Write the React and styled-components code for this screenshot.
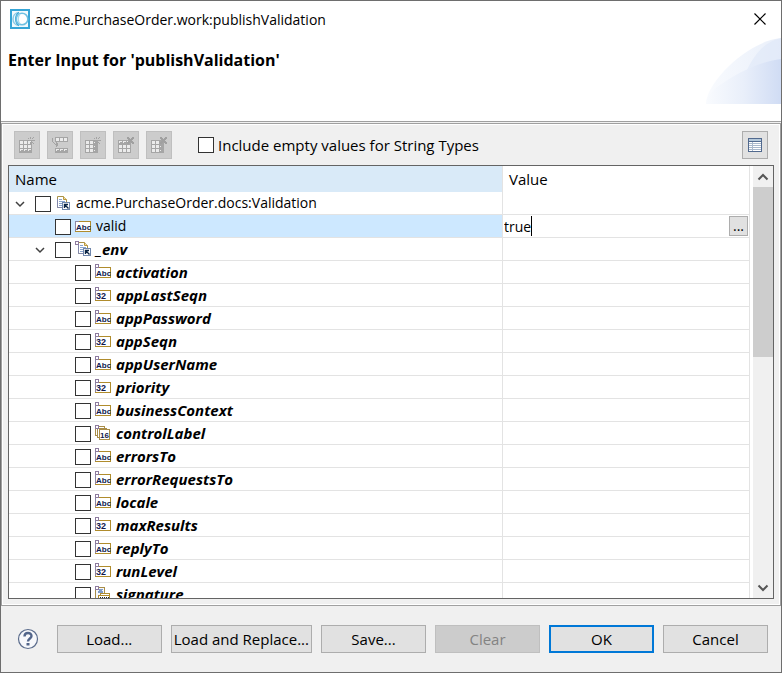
import React from "react";
import styled, { createGlobalStyle } from "styled-components";

const FONT = '"Open Sans", "Noto Sans", sans-serif';

const GlobalStyle = createGlobalStyle`
  *, *::before, *::after { box-sizing: border-box; }
  html, body { margin: 0; padding: 0; }
  body { font-family: ${FONT}; font-size: 15px; color: #000; background: #f0f0f0; }
  button, input { font: inherit; color: inherit; margin: 0; padding: 0; border-radius: 0; }
  svg { display: block; }
`;

const Dialog = styled.div`
  display: flex;
  flex-direction: column;
  height: 100vh;
  border: 1px solid #6e6e6e;
  background: #f0f0f0;
`;

const Header = styled.header`
  display: flex;
  flex-direction: column;
  flex: none;
  height: 121px;
  background: #fff;
  border-bottom: 1px solid #a0a0a0;
`;

const TitleBar = styled.div`
  display: flex;
  align-items: center;
  height: 36px;
  padding: 0 14px 0 9px;
  gap: 5px;
`;

const Title = styled.span`
  flex: 1;
  font-size: 14px;
  white-space: nowrap;
`;

const CloseButton = styled.button`
  display: flex;
  border: 0;
  background: none;
`;

const Banner = styled.div`
  display: flex;
  justify-content: space-between;
  padding-left: 7px;
`;

const Heading = styled.h1`
  margin: 11px 0 0;
  font-size: 16px;
  line-height: 24px;
  font-weight: 700;
  white-space: nowrap;
`;

const Panel = styled.main`
  display: flex;
  flex-direction: column;
  flex: 1;
  min-height: 0;
  margin-top: 1px;
  padding: 6px 6px 6px;
  border: 1px solid #a0a0a0;
  box-shadow: inset 0 0 0 1px #fff;
`;

const Toolbar = styled.div`
  display: flex;
  align-items: center;
  gap: 7px;
  height: 28px;
  margin: 1px 6px 6px 6px;
`;

const ToolButton = styled.button`
  display: flex;
  align-items: center;
  justify-content: center;
  width: 26px;
  height: 28px;
  border: 1px solid #adadad;
  background: #e1e1e1;
  &:disabled {
    border-color: #bfbfbf;
    background: #cccccc;
  }
`;

const Checkbox = styled.input.attrs({ type: "checkbox" })`
  appearance: none;
  flex: none;
  width: 16px;
  height: 16px;
  border: 1px solid #333;
  background: #fff;
  &:checked { background: #333; box-shadow: inset 0 0 0 3px #fff; }
`;

const Option = styled.label`
  display: flex;
  flex: 1;
  align-items: center;
  gap: 4px;
  margin-left: 19px;
  white-space: nowrap;
`;

const TableFrame = styled.div`
  display: flex;
  flex: 1;
  min-height: 0;
  border: 1px solid #646464;
  background: #fff;
`;

const TableView = styled.div`
  flex: 1;
  min-width: 0;
  overflow: hidden;
  padding-right: 3px;
`;

const Table = styled.table`
  width: 100%;
  table-layout: fixed;
  border-collapse: separate;
  border-spacing: 0;
`;

const NameCol = styled.col`
  width: auto;
`;

const ValueCol = styled.col`
  width: 247px;
`;

const HeadCell = styled.th`
  height: 26px;
  padding: 0 0 0 6px;
  border-right: 1px solid #e3e3e3;
  background: ${(p) => (p.$sorted ? "#d9eaf8" : "#fff")};
  font-weight: 400;
  line-height: 24px;
  text-align: left;
`;

const Cell = styled.td`
  height: 23px;
  padding: 0;
  border-right: 1px solid #e3e3e3;
  border-bottom: 1px solid #e3e3e3;
  background: ${(p) => (p.$selected ? "#cde8ff" : "#fff")};
`;

const NameLine = styled.div`
  display: flex;
  align-items: flex-end;
  height: 22px;
  padding-bottom: 2px;
  padding-left: ${(p) => 3 + p.$level * 20}px;
`;

const Toggle = styled.button`
  display: flex;
  align-items: center;
  justify-content: center;
  width: 16px;
  height: 16px;
  margin-right: 7px;
  border: 0;
  background: none;
`;

const ToggleGap = styled.span`
  width: 23px;
`;

const NameLabel = styled.label`
  display: flex;
  align-items: center;
  gap: 5px;
  height: 18px;
  margin-left: 4px;
  line-height: 18px;
  white-space: nowrap;
  font-size: ${(p) => (p.$strong ? 15 : 14)}px;
  font-weight: ${(p) => (p.$strong ? 700 : 400)};
  font-style: ${(p) => (p.$strong ? "italic" : "normal")};
`;

const Editor = styled.div`
  display: flex;
  align-items: center;
  height: 22px;
  padding: 0 1px;
`;

const ValueInput = styled.input`
  field-sizing: content;
  min-width: 0;
  height: 20px;
  border: 0;
  outline: 0;
  background: #fff;
  font-size: 14px;
  caret-color: transparent;
`;

const Caret = styled.span`
  width: 1px;
  height: 20px;
  margin-right: auto;
  background: #000;
`;

const BrowseButton = styled.button`
  width: 19px;
  height: 20px;
  border: 1px solid #adadad;
  background: #e1e1e1;
  font-size: 14px;
  line-height: 16px;
`;

const Scrollbar = styled.div`
  display: flex;
  flex-direction: column;
  flex: none;
  width: 20px;
  background: #f0f0f0;
`;

const ScrollButton = styled.button`
  display: flex;
  align-items: center;
  justify-content: center;
  height: 21px;
  border: 0;
  background: #f0f0f0;
`;

const ScrollTrack = styled.div`
  flex: 1;
`;

const ScrollThumb = styled.div`
  height: 170px;
  background: #cdcdcd;
`;

const Footer = styled.footer`
  display: flex;
  align-items: center;
  justify-content: space-between;
  gap: 9px;
  height: 66px;
  padding: 0 13px 0 16px;
`;

const HelpButton = styled.button`
  display: flex;
  border: 0;
  background: none;
`;

const Actions = styled.div`
  display: flex;
  gap: 9px;
`;

const ActionButton = styled.button`
  min-width: 105px;
  height: 28px;
  padding: 0 2px;
  border: ${(p) => (p.$primary ? "2px solid #0078d7" : "1px solid #adadad")};
  background: #e1e1e1;
  line-height: 24px;
  white-space: nowrap;
  &:disabled {
    border-color: #bfbfbf;
    background: #cccccc;
    color: #838383;
  }
`;

const AppIcon = () => (
  <svg width="20" height="20" viewBox="0 0 20 20">
    <rect x="1" y="1" width="18" height="18" fill="#f2fafd" stroke="#36a5d6" strokeWidth="2" />
    <path d="M9 3.500C1 4 1 16 9 16.500" fill="none" stroke="#8ccbe6" strokeWidth="1.500" />
    <path d="M9 3.500C4.500 6 4.500 14 9 16.500" fill="none" stroke="#36a5d6" strokeWidth="1.200" />
    <circle cx="12" cy="10" r="5.800" fill="#fff" stroke="#6fc0e2" strokeWidth="1.500" />
    <path d="M10 5C7.500 7.500 7.500 12.500 10 15" fill="none" stroke="#a9dbee" strokeWidth="1.500" />
  </svg>
);

const CloseIcon = () => (
  <svg width="14" height="14" viewBox="0 0 14 14">
    <path d="M1.500 1.500l11 11M12.500 1.500l-11 11" stroke="#000" strokeWidth="1.200" />
  </svg>
);

const BannerArt = () => (
  <svg width="75" height="67" viewBox="0 0 75 67">
    <defs>
      <linearGradient id="sweep">
        <stop offset="0" stopColor="#f9fbfe" />
        <stop offset="1" stopColor="#e9effa" />
      </linearGradient>
      <linearGradient id="sweepLow">
        <stop offset="0" stopColor="#f9fbfe" />
        <stop offset="0.5" stopColor="#e9effa" />
        <stop offset="1" stopColor="#d0dcf4" />
      </linearGradient>
    </defs>
    <path d="M0 67C0 45 42 4 75 1V67Z" fill="url(#sweep)" />
    <path d="M40 35C48 18 58 5 75 1V67H40Z" fill="#dce5f7" opacity="0.500" />
    <path d="M0 67C1 59 6 54 11 50C31 36 52 25 75 22V67Z" fill="url(#sweepLow)" />
  </svg>
);

const Grid = ({ x = 0, y = 0, cols = 3, rows = 3 }) => {
  const cells = [];
  for (let r = 0; r < rows; r++)
    for (let c = 0; c < cols; c++)
      cells.push(<rect key={`${r}${c}`} x={x + 1 + c * 4} y={y + 1 + r * 4} width="3" height="3" fill="#ebebeb" />);
  return (
    <>
      <rect x={x} y={y} width={cols * 4 + 1} height={rows * 4 + 1} fill="#a5a5a5" />
      {cells}
    </>
  );
};

const DarkRow = ({ x, y }) => (
  <>
    <rect x={x} y={y} width="13" height="5" fill="#a5a5a5" />
    <path d={`M${x + 1} ${y + 1}h3v1h-2v1h-1zM${x + 5} ${y + 1}h3v1h-2v1h-1zM${x + 9} ${y + 1}h3v1h-2v1h-1z`} fill="#ebebeb" />
  </>
);

const DarkColumn = () => (
  <>
    <rect x="8" y="3" width="5" height="13" fill="#a5a5a5" />
    <path d="M9 5h1v1h-1zM9 9h1v1h-1zM9 13h1v1h-1z" fill="#ebebeb" />
  </>
);

const Spark = () => (
  <path d="M11 0h1v2h-1zM11 5h1v2h-1zM8 3h2v1h-2zM13 3h3v1h-3zM9 1h1v1h-1zM14 0h1v1h-1zM13 1h1v1h-1zM13 5h1v1h-1zM14 6h1v1h-1z" fill="#a3a3a3" />
);

const Cross = () => (
  <path d="M9 0h2v1h1v1h1V1h1V0h2v2h-1v1h-1v1h1v1h1v2h-2V6h-1V5h-1v1h-1v1H9V5h1V4h1V3h-1V2H9z" fill="#a0a0a0" />
);

const toolIcons = {
  addRow: (
    <>
      <Grid x={0} y={3} />
      <DarkRow x={0} y={11} />
      <Spark />
    </>
  ),
  insertRow: (
    <>
      <Grid x={3} y={0} rows={1} />
      <DarkRow x={3} y={11} />
      <path d="M0 1h1v4H0zM1 5h1v1H1zM2 6h1v1H2zM3 7h3v1H3zM4 5h1v5H4zM5 6h1v3H5z" fill="#a3a3a3" />
    </>
  ),
  addColumn: (
    <>
      <Grid x={0} y={3} />
      <DarkColumn />
      <Spark />
    </>
  ),
  deleteRow: (
    <>
      <Grid x={0} y={3} />
      <DarkRow x={0} y={3} />
      <Cross />
    </>
  ),
  deleteColumn: (
    <>
      <Grid x={0} y={3} />
      <DarkColumn />
      <Cross />
    </>
  ),
};

const ToolIcon = ({ name }) => (
  <svg width="16" height="16" viewBox="0 0 16 16" shapeRendering="crispEdges">{toolIcons[name]}</svg>
);

const ViewIcon = () => (
  <svg width="14" height="14" viewBox="0 0 14 14" shapeRendering="crispEdges">
    <rect x="0.500" y="0.500" width="13" height="13" fill="#fff" stroke="#51698e" />
    <rect x="1" y="1" width="12" height="2" fill="#b4c8da" />
    <path d="M0 3.500h14" stroke="#51698e" />
    <path d="M1 5.500h12M1 7.500h12M1 9.500h12M1 11.500h12M4.500 4v9" stroke="#a9b8cc" />
  </svg>
);

const OptionalMark = () => (
  <rect x="0.500" y="0.500" width="3" height="3" fill="#fff" stroke="#8d7b9e" shapeRendering="crispEdges" />
);

const Glyph = styled.text`
  font: normal 700 ${(p) => p.$size}px "Liberation Sans", sans-serif;
  fill: #10194f;
`;

const LabelBox = ({ text, size, x }) => (
  <>
    <rect x="0.500" y="3.500" width="15" height="10" fill="#fff" stroke="#b08c2c" shapeRendering="crispEdges" />
    <path d="M0.500 13V3.500H4" fill="none" stroke="#8a86a6" shapeRendering="crispEdges" />
    <Glyph x={x} y="12" $size={size}>{text}</Glyph>
  </>
);

const DocShape = ({ x }) => (
  <g transform={`translate(${x} 0)`}>
    <path d="M0.500 1.500H6.500L9.500 4.500V12.500H0.500Z" fill="#fff" stroke="#a99248" />
    <path d="M0.500 4V12.500H5" fill="none" stroke="#8288aa" />
    <path d="M6.500 1.500V4.500H9.500" fill="#f3dfa0" stroke="#b9973f" />
    <path d="M2 4.500h3M2 6.500h6M2 8.500h4M2 10.500h3" stroke="#88a4cf" />
    <rect x="5.500" y="7.500" width="7" height="7" fill="#fff" stroke="#6f86ab" />
    <path d="M7.500 13V9.500H11M8 10l3.500 3.500" fill="none" stroke="#0b2545" strokeWidth="1.400" />
  </g>
);

const typeIcons = {
  docRef: <DocShape x={2} />,
  docRefOptional: (<><DocShape x={3} /><OptionalMark /></>),
  string: <LabelBox text="Abc" size={8} x="1" />,
  stringOptional: (<><LabelBox text="Abc" size={8} x="1" /><OptionalMark /></>),
  number: (<><LabelBox text="32" size={9} x="1" /><OptionalMark /></>),
  list: (
    <>
      <g fill="#fff" stroke="#a98d48" shapeRendering="crispEdges">
        <rect x="0.500" y="1.500" width="9" height="9" />
        <rect x="2.500" y="3.500" width="9" height="9" />
        <rect x="4.500" y="4.500" width="10" height="10" />
      </g>
      <Glyph x="5" y="13" $size={8}>16</Glyph>
      <OptionalMark />
    </>
  ),
  object: (
    <g shapeRendering="crispEdges">
      <rect x="0.500" y="1.500" width="9" height="11" fill="#f4f8fd" stroke="#a98d48" />
      <path d="M5.500 2.500v5M3 5h5M3.500 3l4 4M7.500 3l-4 4" stroke="#7f9bc8" />
      <rect x="5.500" y="7.500" width="9" height="7" fill="#fff" stroke="#b08c2c" />
      <rect x="3.500" y="9.500" width="11" height="6" fill="#fff" stroke="#b08c2c" />
      <path d="M5 11.500h9M6 12.500h9M5 13.500h9" stroke="#222" strokeDasharray="1 1" />
      <OptionalMark />
    </g>
  ),
};

const TypeIcon = ({ name }) => (
  <svg width="16" height="16" viewBox="0 0 16 16">{typeIcons[name]}</svg>
);

const ExpandIcon = () => (
  <svg width="10" height="8" viewBox="0 0 10 8">
    <path d="M1 2l4 4 4-4" fill="none" stroke="#404040" strokeWidth="1.500" />
  </svg>
);

const ArrowIcon = ({ up }) => (
  <svg width="12" height="10" viewBox="0 0 12 10">
    <path d={up ? "M1.500 7.500L6 3l4.500 4.500" : "M1.500 2.500L6 7l4.500-4.500"} fill="none" stroke="#555" strokeWidth="2" />
  </svg>
);

const HelpIcon = () => (
  <svg width="22" height="22" viewBox="0 0 22 22">
    <circle cx="11" cy="11" r="9.500" fill="#f7f8fb" stroke="#5b6c8c" strokeWidth="1.200" />
    <path d="M7.500 8.500C7.500 4 14.500 4 14.500 8C14.500 10.500 11 10.500 11 13.500" fill="none" stroke="#52658a" strokeWidth="2.400" />
    <rect x="9.500" y="15" width="3" height="2.500" fill="#52658a" />
  </svg>
);

const rows = [
  { name: "acme.PurchaseOrder.docs:Validation", level: 0, icon: "docRef", open: true },
  { name: "valid", level: 1, icon: "string", selected: true, value: "true" },
  { name: "_env", level: 1, icon: "docRefOptional", open: true, strong: true },
  ...[
    ["activation", "stringOptional"],
    ["appLastSeqn", "number"],
    ["appPassword", "stringOptional"],
    ["appSeqn", "number"],
    ["appUserName", "stringOptional"],
    ["priority", "number"],
    ["businessContext", "stringOptional"],
    ["controlLabel", "list"],
    ["errorsTo", "stringOptional"],
    ["errorRequestsTo", "stringOptional"],
    ["locale", "stringOptional"],
    ["maxResults", "number"],
    ["replyTo", "stringOptional"],
    ["runLevel", "number"],
    ["signature", "object"],
  ].map(([name, icon]) => ({ name, icon, level: 2, strong: true })),
];

const tools = [
  ["addRow", "Add row"],
  ["insertRow", "Insert row"],
  ["addColumn", "Add column"],
  ["deleteRow", "Delete row"],
  ["deleteColumn", "Delete column"],
];

const FieldRow = ({ row }) => {
  const id = `field-${row.name}`;
  return (
    <tr>
      <Cell $selected={row.selected}>
        <NameLine $level={row.level}>
          {row.open ? (
            <Toggle aria-label={`Collapse ${row.name}`} aria-expanded="true"><ExpandIcon /></Toggle>
          ) : (
            <ToggleGap />
          )}
          <Checkbox id={id} />
          <NameLabel htmlFor={id} $strong={row.strong}>
            <TypeIcon name={row.icon} />
            {row.name}
          </NameLabel>
        </NameLine>
      </Cell>
      <Cell>
        {row.value && (
          <Editor>
            <ValueInput aria-label={`Value of ${row.name}`} defaultValue={row.value} />
            <Caret />
            <BrowseButton aria-label="Edit value">...</BrowseButton>
          </Editor>
        )}
      </Cell>
    </tr>
  );
};

export default function App() {
  return (
    <>
      <GlobalStyle />
      <Dialog role="dialog" aria-labelledby="dialog-title">
        <Header>
          <TitleBar>
            <AppIcon />
            <Title id="dialog-title">acme.PurchaseOrder.work:publishValidation</Title>
            <CloseButton aria-label="Close"><CloseIcon /></CloseButton>
          </TitleBar>
          <Banner>
            <Heading>Enter Input for 'publishValidation'</Heading>
            <BannerArt />
          </Banner>
        </Header>
        <Panel>
          <Toolbar>
            {tools.map(([name, label]) => (
              <ToolButton key={name} aria-label={label} disabled><ToolIcon name={name} /></ToolButton>
            ))}
            <Option>
              <Checkbox />
              Include empty values for String Types
            </Option>
            <ToolButton aria-label="Table view"><ViewIcon /></ToolButton>
          </Toolbar>
          <TableFrame>
            <TableView>
              <Table>
                <colgroup>
                  <NameCol />
                  <ValueCol />
                </colgroup>
                <thead>
                  <tr>
                    <HeadCell scope="col" $sorted>Name</HeadCell>
                    <HeadCell scope="col">Value</HeadCell>
                  </tr>
                </thead>
                <tbody>
                  {rows.map((row) => <FieldRow key={row.name} row={row} />)}
                </tbody>
              </Table>
            </TableView>
            <Scrollbar>
              <ScrollButton aria-label="Scroll up"><ArrowIcon up /></ScrollButton>
              <ScrollTrack><ScrollThumb /></ScrollTrack>
              <ScrollButton aria-label="Scroll down"><ArrowIcon /></ScrollButton>
            </Scrollbar>
          </TableFrame>
        </Panel>
        <Footer>
          <HelpButton aria-label="Help"><HelpIcon /></HelpButton>
          <Actions>
            <ActionButton>Load...</ActionButton>
            <ActionButton>Load and Replace...</ActionButton>
            <ActionButton>Save...</ActionButton>
            <ActionButton disabled>Clear</ActionButton>
            <ActionButton $primary>OK</ActionButton>
            <ActionButton>Cancel</ActionButton>
          </Actions>
        </Footer>
      </Dialog>
    </>
  );
}
